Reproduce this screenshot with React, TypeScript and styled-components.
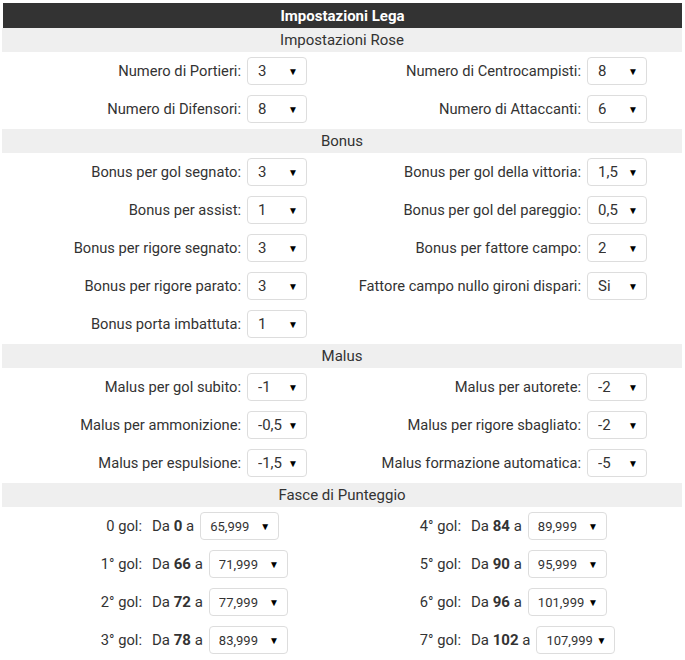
import React from 'react';
import styled, { createGlobalStyle } from 'styled-components';

const GlobalStyle = createGlobalStyle`
    body {
        margin: 0;
        background: #fff;
        font-family: Roboto, "Liberation Sans", sans-serif;
        color: #333;
    }
`

const Page = styled.div`
    width: 680px;
    padding: 3px 3px 0 2px;
`

const TitleBar = styled.div`
    height: 25px;
    background: #333;
    color: #fff;
    font-weight: bold;
    font-size: 15px;
    display: flex;
    align-items: center;
    justify-content: center;
    margin-left: 1px;
`

const SectionHeader = styled.div`
    height: 24px;
    background: #efefef;
    font-size: 15px;
    display: flex;
    align-items: center;
    justify-content: center;
`

const Rows = styled.div`
    display: grid;
    grid-template-columns: 340px 340px;
    padding-bottom: 1px;
`

const Field = styled.div<{labelWidth: number; gap?: number}>`
    height: 38px;
    display: grid;
    grid-template-columns: ${({labelWidth}) => labelWidth}px auto;
    column-gap: ${({gap}) => gap ?? 6}px;
    align-items: center;
    justify-content: start;
`

const Label = styled.div`
    text-align: right;
    font-size: 14.7px;
    white-space: nowrap;
`

const SelectBox = styled.div<{boxWidth: number; small?: boolean}>`
    width: ${({boxWidth}) => boxWidth}px;
    height: 28px;
    box-sizing: border-box;
    border: 1px solid #ddd;
    border-radius: 4px;
    background: #fff;
    display: flex;
    align-items: center;
    justify-content: space-between;
    padding: 0 8px 0 ${({small}) => small ? 9 : 10}px;
    font-size: ${({small}) => small ? 13 : 15}px;
`

const SelectValue = styled.span<{clip?: boolean}>`
    overflow: hidden;
    white-space: nowrap;
    max-width: ${({clip}) => clip ? '26px' : 'none'};
`

const Arrow = styled.span`
    font-size: 10px;
    color: #000;
`

const Range = styled.div`
    display: flex;
    align-items: center;
    gap: 6px;
    font-size: 15px;
    white-space: nowrap;

    b {
        font-weight: bold;
    }
`

const Select = ({value, width = 60, small}: {value: string; width?: number; small?: boolean}) => (
    <SelectBox boxWidth={width} small={small}>
        <SelectValue clip={!small}>{value}</SelectValue>
        <Arrow>▼</Arrow>
    </SelectBox>
)

type Pair = [string, string] | null;

const sections: {title: string; rows: [Pair, Pair][]}[] = [
    {
        title: 'Impostazioni Rose',
        rows: [
            [['Numero di Portieri:', '3'], ['Numero di Centrocampisti:', '8']],
            [['Numero di Difensori:', '8'], ['Numero di Attaccanti:', '6']],
        ],
    },
    {
        title: 'Bonus',
        rows: [
            [['Bonus per gol segnato:', '3'], ['Bonus per gol della vittoria:', '1,5']],
            [['Bonus per assist:', '1'], ['Bonus per gol del pareggio:', '0,5']],
            [['Bonus per rigore segnato:', '3'], ['Bonus per fattore campo:', '2']],
            [['Bonus per rigore parato:', '3'], ['Fattore campo nullo gironi dispari:', 'Si']],
            [['Bonus porta imbattuta:', '1'], null],
        ],
    },
    {
        title: 'Malus',
        rows: [
            [['Malus per gol subito:', '-1'], ['Malus per autorete:', '-2']],
            [['Malus per ammonizione:', '-0,5'], ['Malus per rigore sbagliato:', '-2']],
            [['Malus per espulsione:', '-1,5'], ['Malus formazione automatica:', '-5']],
        ],
    },
]

const fasce = [
    ['0 gol:', '0', '65,999'],
    ['1° gol:', '66', '71,999'],
    ['2° gol:', '72', '77,999'],
    ['3° gol:', '78', '83,999'],
    ['4° gol:', '84', '89,999'],
    ['5° gol:', '90', '95,999'],
    ['6° gol:', '96', '101,999'],
    ['7° gol:', '102', '107,999'],
]

const renderPair = (pair: Pair, key: string) => (
    <Field labelWidth={239} key={key}>
        {pair && <Label>{pair[0]}</Label>}
        {pair && <Select value={pair[1]} />}
    </Field>
)

const renderFascia = ([label, from, to]: string[], labelWidth: number) => (
    <Field labelWidth={labelWidth} gap={10}>
        <Label>{label}</Label>
        <Range>
            <span>Da <b>{from}</b> a</span>
            <Select value={to} width={79} small />
        </Range>
    </Field>
)

const App = () => {
    return (
        <Page>
            <GlobalStyle />
            <TitleBar>Impostazioni Lega</TitleBar>
            {sections.map(section => (
                <React.Fragment key={section.title}>
                    <SectionHeader>{section.title}</SectionHeader>
                    <Rows>
                        {section.rows.map(([left, right], i) => (
                            <React.Fragment key={i}>
                                {renderPair(left, `l${i}`)}
                                {renderPair(right, `r${i}`)}
                            </React.Fragment>
                        ))}
                    </Rows>
                </React.Fragment>
            ))}
            <SectionHeader>Fasce di Punteggio</SectionHeader>
            <Rows>
                {[0, 1, 2, 3].map(i => (
                    <React.Fragment key={i}>
                        {renderFascia(fasce[i], 140)}
                        {renderFascia(fasce[i + 4], 119)}
                    </React.Fragment>
                ))}
            </Rows>
        </Page>
    )
}

export default App;
